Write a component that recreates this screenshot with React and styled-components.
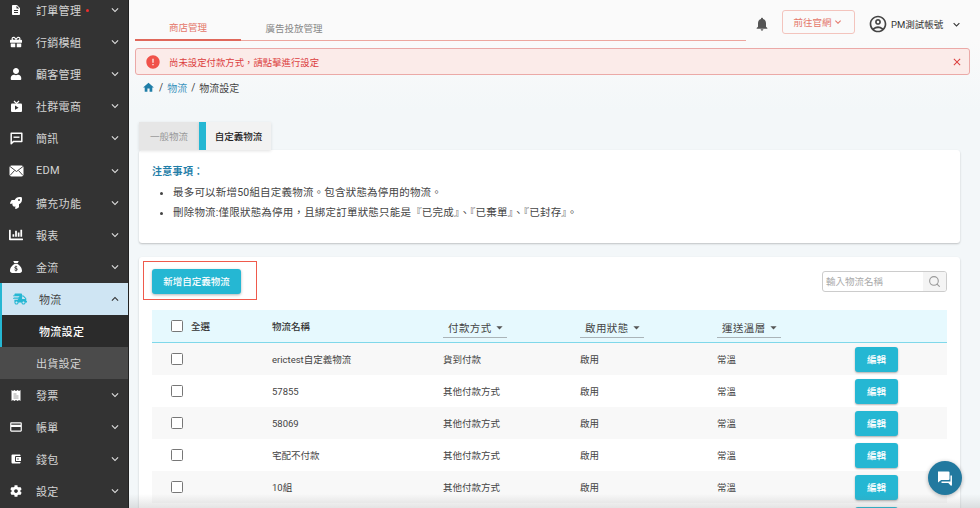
import React from 'react';
import styled, { createGlobalStyle } from 'styled-components';
import {
  MdDescription, MdCreditCard, MdHome, MdNotifications, MdError, MdClose,
  MdKeyboardArrowDown, MdKeyboardArrowUp, MdArrowDropDown, MdOutlineAccountCircle,
  MdAccountBalanceWallet,
} from 'react-icons/md';
import { FaGift, FaUser, FaRocket, FaChartBar, FaShippingFast, FaCog } from 'react-icons/fa';
import { FaSackDollar } from 'react-icons/fa6';
import { FiSearch } from 'react-icons/fi';

const GlobalStyle = createGlobalStyle`
  html, body { margin: 0; height: 100%; overflow: hidden; }
  body {
    font-family: Roboto, "Noto Sans CJK TC", sans-serif;
    color: #333;
    background: #f3f7f9;
  }
  * { box-sizing: border-box; }
`;

const Page = styled.div`
  display: flex;
  width: 980px;
  height: 508px;
  overflow: hidden;
  position: relative;
`;

const Sidebar = styled.nav`
  flex: 0 0 129px;
  height: 508px;
  background: #333;
  border-right: 1px solid #222;
  overflow: hidden;
`;

const MenuList = styled.div`
  margin-top: -6px;
`;

const MenuItem = styled.div`
  display: flex;
  align-items: center;
  height: 32.1px;
  padding-left: ${p => (p.$active ? '6px' : '4px')};
  border-left: ${p => (p.$active ? '2px solid #25b7d3' : 'none')};
  background: ${p => (p.$active ? '#cfe5f3' : 'transparent')};
  color: ${p => (p.$active ? '#444' : '#d4d4d4')};
  font-size: 11px;
  letter-spacing: 0.3px;
`;

const MenuIcon = styled.span`
  flex: 0 0 ${p => (p.$active ? '31px' : '32px')};
  display: flex;
  justify-content: center;
  padding-right: 8px;
  color: ${p => (p.$active ? '#25b7d3' : '#fff')};
  font-size: ${p => p.$size || 12}px;
`;

const MenuLabel = styled.span`
  flex: 1;
  display: flex;
  align-items: center;
`;

const Dot = styled.i`
  width: 3px;
  height: 3px;
  margin-left: 5px;
  border-radius: 50%;
  background: #f02d2d;
`;

const MenuArrow = styled.span`
  display: flex;
  margin-right: 6px;
  color: ${p => (p.$active ? '#333' : '#ddd')};
  font-size: 14px;
`;

const SubItem = styled.div`
  display: flex;
  align-items: center;
  height: 32.1px;
  padding-left: ${p => (p.$active ? '37px' : '36px')};
  border-left: ${p => (p.$active ? '2px solid #25b7d3' : 'none')};
  background: ${p => (p.$active ? '#2b2b2b' : '#4b4b4b')};
  color: ${p => (p.$active ? '#fff' : '#d4d4d4')};
  font-size: 11px;
  font-weight: ${p => (p.$active ? 500 : 400)};
  letter-spacing: 0.3px;
`;

const Main = styled.main`
  flex: 1;
  min-width: 0;
  height: 508px;
  overflow: hidden;
  background: linear-gradient(#fafafa 0, #fafafa 40px, #f3f7f9 110px);
`;

const TopBar = styled.header`
  display: flex;
  align-items: flex-end;
  height: 41px;
  padding-left: 6px;
`;

const TopTabs = styled.div`
  display: flex;
  width: 611px;
  height: 41px;
  border-bottom: 1px solid #eda69e;
`;

const TopTab = styled.div`
  display: flex;
  align-items: center;
  justify-content: center;
  width: 106px;
  height: 41px;
  padding-top: 14px;
  margin-bottom: -1px;
  font-size: 9.5px;
  color: ${p => (p.$active ? '#e4776a' : '#888')};
  border-bottom: ${p => (p.$active ? '2px solid #e0685b' : 'none')};
`;

const TopRight = styled.div`
  display: flex;
  align-items: center;
  height: 41px;
  padding-top: 7px;
`;

const Bell = styled.span`
  display: flex;
  margin-left: 8px;
  color: #555;
  font-size: 16px;
`;

const SiteButton = styled.div`
  display: flex;
  align-items: center;
  justify-content: center;
  width: 73px;
  height: 24px;
  margin: 0 0 4px 12px;
  border: 1px solid #f3c4bd;
  border-radius: 3px;
  color: #e4776a;
  font-size: 9.5px;
`;

const Account = styled.div`
  display: flex;
  align-items: center;
  margin-left: 13px;
  font-size: 9.5px;
  color: #333;
`;

const AccountName = styled.span`
  margin: 0 7px 0 3px;
`;

const Alert = styled.div`
  display: flex;
  align-items: center;
  width: 835px;
  height: 27px;
  margin: 7px 0 0 6px;
  padding: 0 6px 0 9px;
  background: #fbebe9;
  border: 1px solid #eba9a7;
  border-radius: 3px;
  color: #dc4040;
  font-size: 9.4px;
`;

const AlertText = styled.span`
  flex: 1;
  margin-left: 8px;
`;

const Breadcrumb = styled.div`
  display: flex;
  align-items: center;
  gap: 4px;
  height: 14px;
  margin: 5px 0 0 13px;
  font-size: 10px;
  color: #444;
`;

const CrumbHome = styled.span`
  display: flex;
  color: #1f7ea8;
  font-size: 13px;
`;

const CrumbLink = styled.span`
  color: #3a93bd;
`;

const Content = styled.div`
  width: 821px;
  margin: 28px 0 0 10px;
`;

const TabRow = styled.div`
  display: flex;
  height: 28px;
`;

const PanelTab = styled.div`
  display: flex;
  align-items: center;
  justify-content: center;
  height: 28px;
  width: ${p => (p.$active ? '72px' : '60px')};
  background: ${p => (p.$active ? '#f2f2f2' : '#e6e6e6')};
  border-left: ${p => (p.$active ? '7px solid #25b7d3' : 'none')};
  color: ${p => (p.$active ? '#222' : '#999')};
  font-size: 9.5px;
  font-weight: ${p => (p.$active ? 500 : 400)};
  box-shadow: 0 1px 3px rgba(0, 0, 0, 0.12);
`;

const Card = styled.section`
  background: #fff;
  border-radius: 3px;
  box-shadow: 0 1px 2px rgba(0, 0, 0, 0.22);
`;

const NoticeCard = styled(Card)`
  height: 93px;
  padding: 14px 13px 0;
`;

const NoticeTitle = styled.div`
  color: #1f7ea8;
  font-size: 10px;
  font-weight: 700;
  letter-spacing: 0.3px;
  line-height: 16px;
`;

const NoticeList = styled.ul`
  margin: 3px 0 0;
  padding-left: 21px;
  font-size: 10.5px;
  line-height: 20px;
  letter-spacing: 0.2px;
  color: #444;
`;

const ListCard = styled(Card)`
  margin-top: 14px;
  height: 400px;
  padding: 4px 13px 0;
`;

const Toolbar = styled.div`
  display: flex;
  align-items: center;
  justify-content: space-between;
  height: 39px;
`;

const Highlight = styled.div`
  display: flex;
  align-items: center;
  width: 114px;
  height: 39px;
  margin-left: -9px;
  padding: 1px 0 0 8px;
  border: 1px solid #ef5a4c;
`;

const AddButton = styled.button`
  width: 89px;
  height: 25px;
  padding: 0;
  border: 0;
  border-radius: 3px;
  background: #25b7d3;
  color: #fff;
  font: 500 9.5px Roboto, "Noto Sans CJK TC", sans-serif;
  box-shadow: 0 1px 3px rgba(0, 0, 0, 0.3);
`;

const SearchBox = styled.div`
  display: flex;
  width: 125px;
  height: 21px;
  margin-top: 2px;
  border: 1px solid #ccc;
  border-radius: 3px;
  overflow: hidden;
`;

const SearchInput = styled.div`
  flex: 1;
  padding-left: 3px;
  font-size: 9.5px;
  line-height: 19px;
  color: #aaa;
`;

const SearchIcon = styled.span`
  display: flex;
  align-items: center;
  justify-content: center;
  width: 23px;
  background: #f4f4f4;
  color: #999;
  font-size: 13px;
`;

const Table = styled.div`
  margin-top: 10px;
`;

const Row = styled.div`
  display: grid;
  grid-template-columns: 120px 171px 137px 137px 138px 92px;
  align-items: center;
  height: 32px;
  font-size: 9.5px;
  color: #444;
  background: ${p => (p.$odd ? '#f8f8f8' : '#fff')};
`;

const HeadRow = styled(Row)`
  height: 33px;
  background: #e6f9fe;
  border-bottom: 1px solid #7fd8ea;
  color: #333;
`;

const CheckCell = styled.div`
  display: flex;
  align-items: center;
  gap: 8px;
  padding-left: 19px;
  font-weight: ${p => (p.$head ? 500 : 400)};
`;

const Check = styled.span`
  width: 12px;
  height: 12px;
  border: 1.5px solid #777;
  border-radius: 1.5px;
  background: #fff;
`;

const HeadName = styled.div`
  font-weight: 500;
`;

const FilterSelect = styled.div`
  display: flex;
  align-items: center;
  justify-content: space-between;
  width: 64px;
  height: 21px;
  padding-left: 5px;
  margin-top: 3px;
  border-bottom: 1px solid #aab4b8;
  font-size: 10.5px;
  letter-spacing: 0.4px;
  color: #444;
`;

const FilterArrow = styled.span`
  display: flex;
  font-size: 15px;
  color: #555;
`;

const EditButton = styled.button`
  width: 43px;
  height: 25px;
  padding: 0;
  border: 0;
  border-radius: 3px;
  background: #25b7d3;
  color: #fff;
  font: 500 9.5px Roboto, "Noto Sans CJK TC", sans-serif;
  box-shadow: 0 1px 2px rgba(0, 0, 0, 0.3);
`;

const BottomFade = styled.div`
  position: absolute;
  left: 129px;
  right: 0;
  bottom: 0;
  height: 14px;
  background: linear-gradient(rgba(120, 120, 120, 0), rgba(120, 120, 120, 0.2));
  pointer-events: none;
`;

const ChatBubble = styled.div`
  position: absolute;
  left: 928px;
  top: 461px;
  display: flex;
  align-items: center;
  justify-content: center;
  width: 34px;
  height: 34px;
  border-radius: 50%;
  background: #22799f;
  box-shadow: 0 1px 4px rgba(0, 0, 0, 0.3);
`;

const TvIcon = () => (
  <svg width="13" height="13" viewBox="0 0 13 13">
    <path d="M4 1l2.5 2.5L9 1" fill="none" stroke="#fff" strokeWidth="1.2" />
    <rect x="1" y="3.5" width="11" height="8.5" rx="1" fill="#fff" />
    <path d="M5 5.6v4.2l3.6-2.1z" fill="#333" />
  </svg>
);

const SmsIcon = () => (
  <svg width="13" height="13" viewBox="0 0 13 13">
    <path d="M1.2 1.2h10.6v8.2H3.6l-2.4 2.3z" fill="none" stroke="#fff" strokeWidth="1.5" strokeLinejoin="round" />
    <path d="M3.5 5.2h6" stroke="#fff" strokeWidth="1.4" />
  </svg>
);

const MailIcon = () => (
  <svg width="15" height="12" viewBox="0 0 15 12">
    <rect x="0.5" y="0.5" width="14" height="11" rx="2" fill="#fff" />
    <path d="M1 1.5l6.5 5 6.5-5M1 10.5l4.5-5M14 10.5l-4.5-5" fill="none" stroke="#333" strokeWidth="0.9" />
  </svg>
);

const ReceiptIcon = () => (
  <svg width="10" height="13" viewBox="0 0 10 13">
    <path d="M0.5 1l1.5 1L3.3 1l1.7 1L6.7 1 8 2l1.5-1v11L8 11l-1.3 1L5 11l-1.7 1L2 11l-1.5 1z" fill="#fff" />
    <path d="M2.5 5h3M2.5 7h5M2.5 9h5" stroke="#888" strokeWidth="0.8" />
  </svg>
);

const ChatIcon = () => (
  <svg width="18" height="18" viewBox="0 0 18 18">
    <path d="M2 2.5h10.5a1 1 0 0 1 1 1v6.5a1 1 0 0 1-1 1H5.2L2 13.5z" fill="#fff" />
    <path d="M15.2 6.5v6.8H5.5M15.2 13.3v2.7l-2.6-2.7" fill="none" stroke="#fff" strokeWidth="1.5" strokeLinejoin="round" />
  </svg>
);

const menuTop = [
  { label: '訂單管理', icon: <MdDescription />, dot: true },
  { label: '行銷模組', icon: <FaGift /> },
  { label: '顧客管理', icon: <FaUser /> },
  { label: '社群電商', icon: <TvIcon /> },
  { label: '簡訊', icon: <SmsIcon /> },
  { label: 'EDM', icon: <MailIcon /> },
  { label: '擴充功能', icon: <FaRocket /> },
  { label: '報表', icon: <FaChartBar />, size: 14 },
  { label: '金流', icon: <FaSackDollar /> },
];

const menuBottom = [
  { label: '發票', icon: <ReceiptIcon /> },
  { label: '帳單', icon: <MdCreditCard />, size: 14 },
  { label: '錢包', icon: <MdAccountBalanceWallet /> },
  { label: '設定', icon: <FaCog /> },
];

const rows = [
  { id: 1, name: 'erictest自定義物流', pay: '貨到付款', status: '啟用', temp: '常溫' },
  { id: 2, name: '57855', pay: '其他付款方式', status: '啟用', temp: '常溫' },
  { id: 3, name: '58069', pay: '其他付款方式', status: '啟用', temp: '常溫' },
  { id: 4, name: '宅配不付款', pay: '其他付款方式', status: '啟用', temp: '常溫' },
  { id: 5, name: '10組', pay: '其他付款方式', status: '啟用', temp: '常溫' },
  // only the top edge of this row's button shows above the fold
  { id: 6, name: '', pay: '', status: '', temp: '' },
];

const renderMenu = items =>
  items.map(item => (
    <MenuItem key={item.label}>
      <MenuIcon $size={item.size}>{item.icon}</MenuIcon>
      <MenuLabel>
        {item.label}
        {item.dot && <Dot />}
      </MenuLabel>
      <MenuArrow><MdKeyboardArrowDown /></MenuArrow>
    </MenuItem>
  ));

const Filter = ({ label }) => (
  <FilterSelect>
    {label}
    <FilterArrow><MdArrowDropDown /></FilterArrow>
  </FilterSelect>
);

const App = () => (
  <Page>
    <GlobalStyle />
    <Sidebar>
      <MenuList>
        {renderMenu(menuTop)}
        <MenuItem $active>
          <MenuIcon $active $size={14}><FaShippingFast /></MenuIcon>
          <MenuLabel>物流</MenuLabel>
          <MenuArrow $active><MdKeyboardArrowUp /></MenuArrow>
        </MenuItem>
        <SubItem $active>物流設定</SubItem>
        <SubItem>出貨設定</SubItem>
        {renderMenu(menuBottom)}
      </MenuList>
    </Sidebar>
    <Main>
      <TopBar>
        <TopTabs>
          <TopTab $active>商店管理</TopTab>
          <TopTab>廣告投放管理</TopTab>
        </TopTabs>
        <TopRight>
          <Bell><MdNotifications /></Bell>
          <SiteButton>
            前往官網
            <MdKeyboardArrowDown size={12} />
          </SiteButton>
          <Account>
            <MdOutlineAccountCircle size={20} color="#444" />
            <AccountName>PM測試帳號</AccountName>
            <MdKeyboardArrowDown size={13} />
          </Account>
        </TopRight>
      </TopBar>
      <Alert>
        <MdError size={16} color="#f0524a" />
        <AlertText>尚未設定付款方式，請點擊進行設定</AlertText>
        <MdClose size={12} color="#dc4040" />
      </Alert>
      <Breadcrumb>
        <CrumbHome><MdHome /></CrumbHome>
        /
        <CrumbLink>物流</CrumbLink>
        /
        <span>物流設定</span>
      </Breadcrumb>
      <Content>
        <TabRow>
          <PanelTab>一般物流</PanelTab>
          <PanelTab $active>自定義物流</PanelTab>
        </TabRow>
        <NoticeCard>
          <NoticeTitle>注意事項：</NoticeTitle>
          <NoticeList>
            <li>最多可以新增50組自定義物流。包含狀態為停用的物流。</li>
            <li>刪除物流:僅限狀態為停用，且綁定訂單狀態只能是『已完成』、『已棄單』、『已封存』。</li>
          </NoticeList>
        </NoticeCard>
        <ListCard>
          <Toolbar>
            <Highlight>
              <AddButton>新增自定義物流</AddButton>
            </Highlight>
            <SearchBox>
              <SearchInput>輸入物流名稱</SearchInput>
              <SearchIcon><FiSearch /></SearchIcon>
            </SearchBox>
          </Toolbar>
          <Table>
            <HeadRow>
              <CheckCell $head><Check />全選</CheckCell>
              <HeadName>物流名稱</HeadName>
              <Filter label="付款方式" />
              <Filter label="啟用狀態" />
              <Filter label="運送溫層" />
              <div />
            </HeadRow>
            {rows.map((row, i) => (
              <Row key={row.id} $odd={i % 2 === 0}>
                <CheckCell><Check /></CheckCell>
                <div>{row.name}</div>
                <div>{row.pay}</div>
                <div>{row.status}</div>
                <div>{row.temp}</div>
                <EditButton>{row.name && '編輯'}</EditButton>
              </Row>
            ))}
          </Table>
        </ListCard>
      </Content>
    </Main>
    <BottomFade />
    <ChatBubble><ChatIcon /></ChatBubble>
  </Page>
);

export default App;
